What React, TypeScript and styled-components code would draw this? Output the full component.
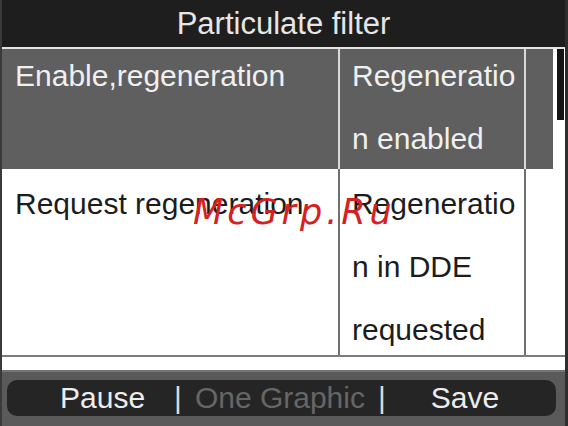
import styled, { createGlobalStyle } from 'styled-components'

const GlobalStyle = createGlobalStyle`
  html, body {
    margin: 0;
    padding: 0;
    background: #ffffff;
  }
  * {
    box-sizing: border-box;
  }
`

const Screen = styled.div`
  position: relative;
  width: 568px;
  height: 426px;
  display: flex;
  flex-direction: column;
  border-left: 2px solid #3a3a3a;
  border-right: 3px solid #2e2e2e;
  font-family: "Liberation Sans", Arial, sans-serif;
  overflow: hidden;
`

const TitleBar = styled.div`
  height: 47px;
  background: #1e1e1e;
  color: #e6e6e6;
  font-size: 31px;
  line-height: 47px;
  text-align: center;
`

const TableArea = styled.div`
  flex: 1;
  display: flex;
  background: #ffffff;
  border-top: 2px solid #e4e4e4;
`

const Rows = styled.div`
  flex: 1;
  display: flex;
  flex-direction: column;
`

const Row = styled.div<{ $selected?: boolean; $height: number }>`
  display: grid;
  grid-template-columns: 338px 186px 1fr;
  height: ${p => p.$height}px;
  background: ${p => (p.$selected ? '#5f5f5f' : '#ffffff')};
  color: ${p => (p.$selected ? '#f0f0f0' : '#1c1c1c')};
  border-bottom: ${p => (p.$selected ? 'none' : '2px solid #7c7c7c')};
  margin-right: ${p => (p.$selected ? 0 : -12)}px;
`

const Cell = styled.div<{ $pad?: number; $divider?: string }>`
  overflow: hidden;
  padding-left: ${p => p.$pad ?? 0}px;
  border-right: ${p => (p.$divider ? `2px solid ${p.$divider}` : 'none')};
  font-size: 30px;
  line-height: 63px;
  overflow-wrap: anywhere;
`

const CellText = styled.div<{ $shift: number }>`
  margin-top: ${p => p.$shift}px;
`

const ScrollTrack = styled.div`
  width: 12px;
  padding-left: 4px;
`

const Thumb = styled.div`
  width: 7px;
  height: 71px;
  background: #141414;
`

const BottomBar = styled.div`
  height: 56px;
  background: #5a5a5a;
  border-top: 2px solid #747474;
  padding: 8px 9px 10px 5px;
`

const Pill = styled.div`
  height: 36px;
  border-radius: 10px;
  background: #252525;
  display: flex;
  align-items: center;
  padding-left: 53px;
  font-size: 30px;
  line-height: 36px;
  white-space: nowrap;
`

const Label = styled.span<{ $muted?: boolean; $ml?: number }>`
  margin-left: ${p => p.$ml ?? 0}px;
  color: ${p => (p.$muted ? '#666666' : '#ededed')};
`

const Sep = styled.span<{ $ml: number }>`
  margin-left: ${p => p.$ml}px;
  color: #dcdcdc;
`

const Watermark = styled.div`
  position: absolute;
  left: 191px;
  top: 195px;
  font-family: "DejaVu Sans", sans-serif;
  font-style: italic;
  font-size: 35px;
  line-height: 34px;
  letter-spacing: 4px;
  color: #d42222;
  pointer-events: none;
`

const rows = [
  { name: 'Enable,regeneration', value: 'Regeneration enabled', selected: true, height: 120, shift: -5 },
  { name: 'Request regeneration', value: 'Regeneration in DDE requested', selected: false, height: 188, shift: 3 },
]

export default function App() {
  return (
    <>
      <GlobalStyle />
      <Screen>
        <TitleBar>Particulate filter</TitleBar>
        <TableArea>
          <Rows>
            {rows.map(r => {
              const divider = r.selected ? '#dadada' : '#707070'
              return (
                <Row key={r.name} $selected={r.selected} $height={r.height}>
                  <Cell $pad={13} $divider={divider}>
                    <CellText $shift={r.shift}>{r.name}</CellText>
                  </Cell>
                  <Cell $pad={12} $divider={divider}>
                    <CellText $shift={r.shift}>{r.value}</CellText>
                  </Cell>
                  <Cell />
                </Row>
              )
            })}
          </Rows>
          <ScrollTrack>
            <Thumb />
          </ScrollTrack>
        </TableArea>
        <BottomBar>
          <Pill>
            <Label>Pause</Label>
            <Sep $ml={29}>|</Sep>
            <Label $muted $ml={13}>One Graphic</Label>
            <Sep $ml={13}>|</Sep>
            <Label $ml={45}>Save</Label>
          </Pill>
        </BottomBar>
        <Watermark>McGrp.Ru</Watermark>
      </Screen>
    </>
  )
}
